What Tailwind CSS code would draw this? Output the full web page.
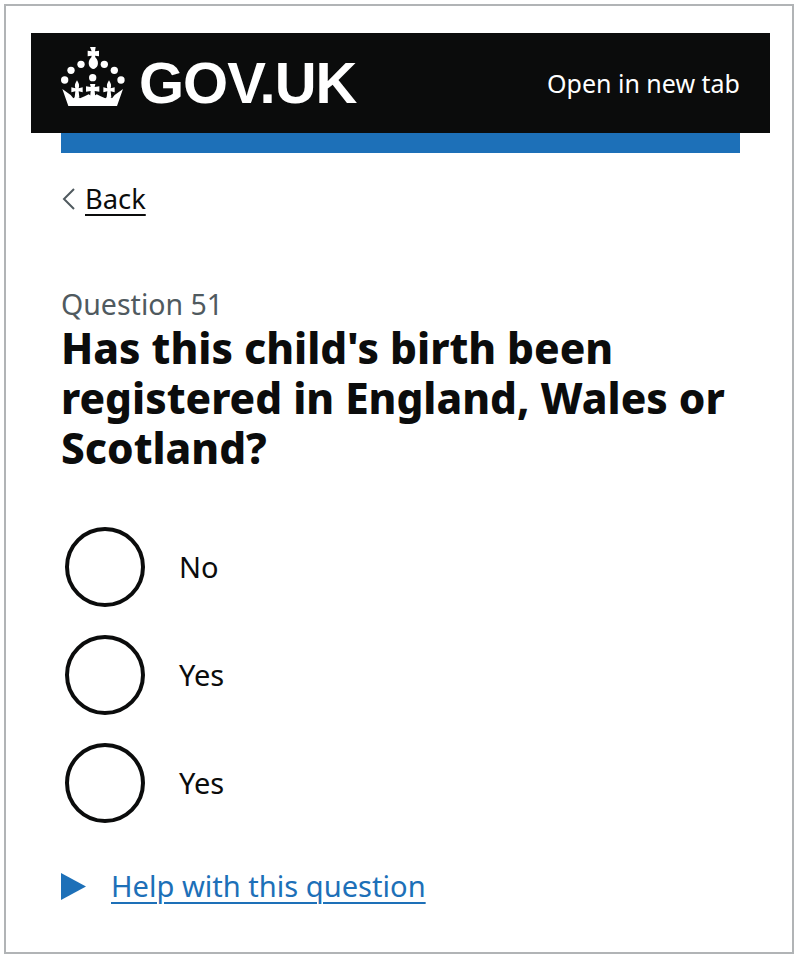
<!DOCTYPE html>
<html lang="en">
<head>
    <meta charset="UTF-8">
    <title>Question 51</title>
    <script src="https://cdn.jsdelivr.net/npm/@tailwindcss/browser@4"></script>
</head>
<body class="bg-white font-['Noto_Sans',sans-serif] text-[#0b0c0c]">
    <div class="m-1 h-[950px] w-[790px] border-2 border-[#b1b4b6] pl-[55px] pr-[52px] pt-[27px]">
        <header class="-mx-[30px] flex h-[100px] items-center justify-between bg-[#0b0c0c] px-[30px] text-white">
            <div class="flex items-center gap-[14px]">
                <svg class="-mt-3 h-[60px] w-[64px]" viewBox="33 36 192 180" fill="#fff">
                    <path d="M120 36h17l-2 13 12-2v17l-12-2 1 5c8 8 9 16 7 24-2 6-8 11-13 11s-11-5-13-11c-2-8-1-16 7-24l1-5-12 2V47l12 2z"/>
                    <circle cx="93" cy="88" r="11"/>
                    <circle cx="163" cy="88" r="11"/>
                    <circle cx="63" cy="106" r="11"/>
                    <circle cx="193" cy="106" r="11"/>
                    <circle cx="44" cy="135" r="11"/>
                    <circle cx="213" cy="135" r="11"/>
                    <circle cx="128" cy="128" r="11"/>
                    <path d="M37 162l25 18 8 10 8-6h4l8 6 14-6 12-6 12 8 12-8 12 6 14 6 8-6h4l8 6 8-10 25-18-18 51H55z"/>
                    <path d="M81 136c6 10 8 15 5 24l12-3v15l-12-3 2 18H74l2-18-12 3v-15l12 3c-3-9-1-14 5-24z"/>
                    <path d="M177 136c6 10 8 15 5 24l12-3v15l-12-3 2 18h-14l2-18-12 3v-15l12 3c-3-9-1-14 5-24z"/>
                    <path d="M120 147h16l-2 9 14-2v16l-14-2 2 20h-16l2-20-14 2v-16l14 2z"/>
                </svg>
                <span class="font-['Liberation_Sans',sans-serif] text-[58px] leading-none font-bold tracking-[-1px]">GOV.UK</span>
            </div>
            <a class="pt-[2px] text-[25px]">Open in new tab</a>
        </header>
        <div class="h-5 bg-[#1d70b8]"></div>

        <a class="mt-[28px] flex items-center gap-[9px] text-[27.300px] leading-[36px]">
            <svg class="h-[24px] w-[15px]" viewBox="0 0 15 24" fill="none" stroke="#505a5f" stroke-width="2"><path d="M13 2L3 12l10 10"/></svg>
            <span class="underline decoration-2 underline-offset-[5px]">Back</span>
        </a>

        <p class="mt-[69px] text-[28.500px] leading-[36px] text-[#505a5f]">Question 51</p>
        <h1 class="mt-[1px] text-[42.250px] leading-[50px] font-extrabold">Has this child's birth been registered in England, Wales or Scotland?</h1>

        <div class="mt-[54px] flex flex-col gap-7">
            <label class="flex items-center gap-[34px] pl-1">
                <span class="size-20 rounded-full border-4 border-[#0b0c0c]"></span>
                <span class="text-[29px]">No</span>
            </label>
            <label class="flex items-center gap-[34px] pl-1">
                <span class="size-20 rounded-full border-4 border-[#0b0c0c]"></span>
                <span class="text-[29px]">Yes</span>
            </label>
            <label class="flex items-center gap-[34px] pl-1">
                <span class="size-20 rounded-full border-4 border-[#0b0c0c]"></span>
                <span class="text-[29px]">Yes</span>
            </label>
        </div>

        <div class="mt-[43px] flex items-center gap-[25px] text-[#1d70b8]">
            <svg class="h-[27px] w-[25px]" viewBox="0 0 25 27" fill="#1d70b8"><path d="M0 0l25 13.500L0 27z"/></svg>
            <a class="text-[29.100px] leading-[40px] underline decoration-2 underline-offset-[5px]">Help with this question</a>
        </div>
    </div>
</body>
</html>
